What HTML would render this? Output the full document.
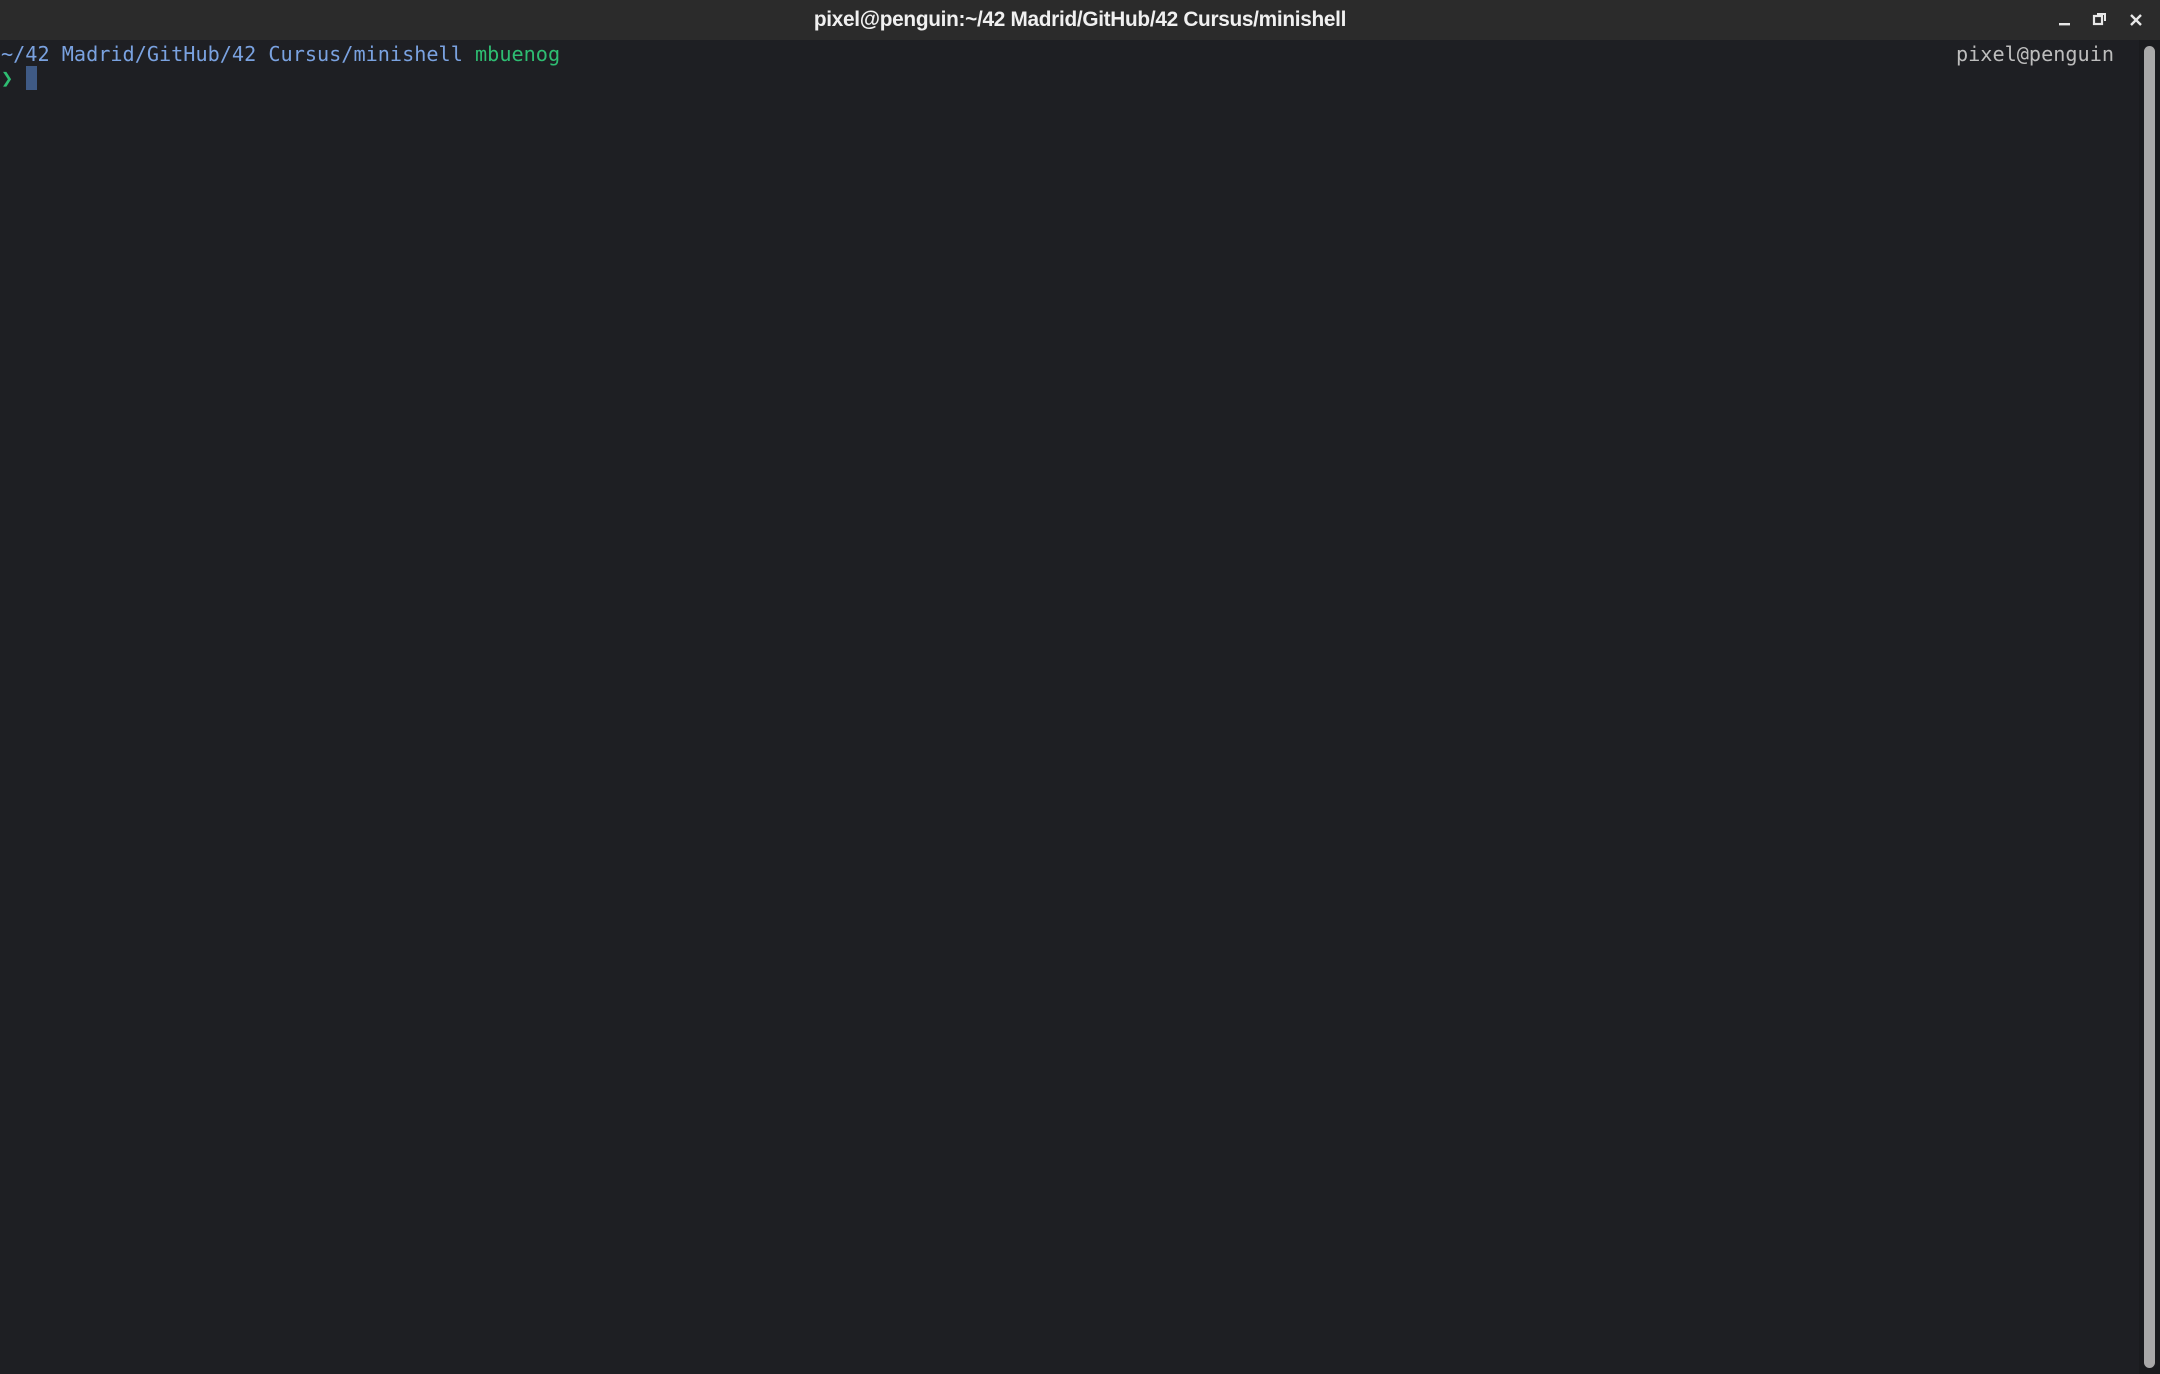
<!DOCTYPE html>
<html><head><meta charset="utf-8"><style>
html,body{margin:0;padding:0;width:2160px;height:1374px;overflow:hidden;background:#1e1f23;}
#title{position:absolute;left:0;top:0;width:2160px;height:40px;background:#2b2b2b;}
#title .t{position:absolute;left:0;width:2160px;top:8px;text-align:center;color:#f0f0f0;font:bold 20.8px "Liberation Sans",sans-serif;letter-spacing:-0.3px;}
.term{position:absolute;font-family:"DejaVu Sans Mono","Liberation Mono",monospace;font-size:20.2px;line-height:24px;white-space:pre;}
#trough{position:absolute;left:2139px;top:40px;width:21px;height:1334px;background:#1a1b1e;}
#thumb{position:absolute;left:2144px;top:46px;width:11px;height:1322px;background:#a9a9a9;border-radius:6px;}
</style></head><body>
<div id="title"><div class="t">pixel@penguin:~/42 Madrid/GitHub/42 Cursus/minishell</div>
<svg style="position:absolute;left:2050px;top:8px" width="105" height="26" viewBox="0 0 105 26">
<rect x="9" y="15" width="11" height="2.4" fill="#e8e8e8"/>
<rect x="44" y="8" width="8" height="8" fill="none" stroke="#e8e8e8" stroke-width="2.2"/>
<path d="M47 6 H55 V13" fill="none" stroke="#e8e8e8" stroke-width="2"/>
<path d="M81 7 L91 17 M91 7 L81 17" stroke="#e8e8e8" stroke-width="2.4"/>
</svg></div>
<div class="term" style="left:1px;top:42px;color:#7aa2e0">~/42 Madrid/GitHub/42 Cursus/minishell <span style="color:#2ebd72">mbuenog</span></div>
<div class="term" style="left:1px;top:66px;color:#2ebd72">❯</div>
<div style="position:absolute;left:26px;top:66px;width:11px;height:24px;background:#3f5a85"></div>
<div class="term" style="left:1956px;top:42px;color:#bdbdbd">pixel@penguin</div>
<div id="trough"></div><div id="thumb"></div>
</body></html>
